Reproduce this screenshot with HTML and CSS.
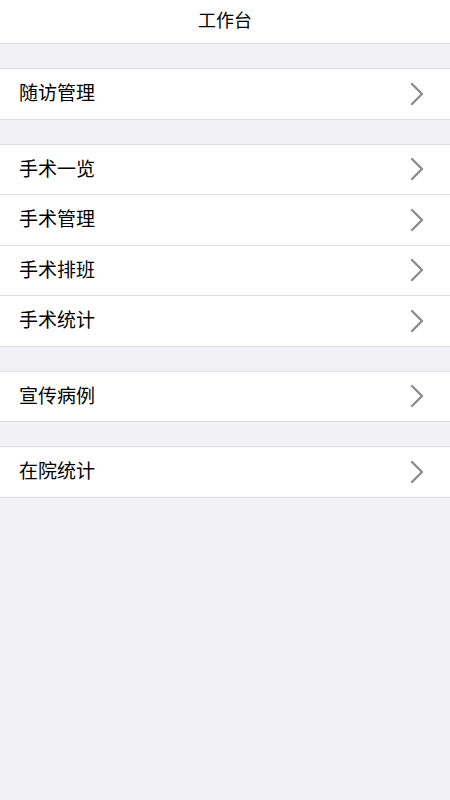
FILE: index.html
```html
<!DOCTYPE html>
<html lang="zh-CN">
<head>
    <meta charset="UTF-8">
    <meta name="viewport" content="width=device-width, initial-scale=1.0">
    <title>工作台</title>
    <link rel="stylesheet" href="styles.css">
</head>
<body>
    <header class="nav-bar">工作台</header>

    <div class="group">
        <a class="cell">
            <span class="cell-title">随访管理</span>
            <svg class="chevron" viewBox="0 0 14 24"><path d="M2 2 L12 12 L2 22"/></svg>
        </a>
    </div>

    <div class="group">
        <a class="cell">
            <span class="cell-title">手术一览</span>
            <svg class="chevron" viewBox="0 0 14 24"><path d="M2 2 L12 12 L2 22"/></svg>
        </a>
        <a class="cell">
            <span class="cell-title">手术管理</span>
            <svg class="chevron" viewBox="0 0 14 24"><path d="M2 2 L12 12 L2 22"/></svg>
        </a>
        <a class="cell">
            <span class="cell-title">手术排班</span>
            <svg class="chevron" viewBox="0 0 14 24"><path d="M2 2 L12 12 L2 22"/></svg>
        </a>
        <a class="cell">
            <span class="cell-title">手术统计</span>
            <svg class="chevron" viewBox="0 0 14 24"><path d="M2 2 L12 12 L2 22"/></svg>
        </a>
    </div>

    <div class="group">
        <a class="cell">
            <span class="cell-title">宣传病例</span>
            <svg class="chevron" viewBox="0 0 14 24"><path d="M2 2 L12 12 L2 22"/></svg>
        </a>
    </div>

    <div class="group">
        <a class="cell">
            <span class="cell-title">在院统计</span>
            <svg class="chevron" viewBox="0 0 14 24"><path d="M2 2 L12 12 L2 22"/></svg>
        </a>
    </div>
</body>
</html>
```

FILE: styles.css
```css
html, body {
    height: 100%;
}
body {
    margin: 0;
    padding: 0;
    background: #f2f2f6;
    color: #000;
    font-family: "Noto Sans CJK SC", "Noto Sans", sans-serif;
}
.nav-bar {
    height: 43px;
    line-height: 39px;
    text-align: center;
    font-size: 18px;
    background: #fff;
    border-bottom: 1px solid #dedee2;
}
.group {
    margin-top: 24px;
    background: #fff;
    border-top: 1px solid #dedee2;
}
.cell {
    display: flex;
    align-items: center;
    justify-content: space-between;
    height: 49.5px;
    padding: 0 26px 0 19px;
    border-bottom: 1px solid #dedee2;
}
.cell-title {
    font-size: 19px;
    margin-top: -4px;
}
.chevron {
    width: 14px;
    height: 24px;
    fill: none;
    stroke: #8c8c8c;
    stroke-width: 2.4;
    stroke-linecap: round;
    stroke-linejoin: round;
}
```
